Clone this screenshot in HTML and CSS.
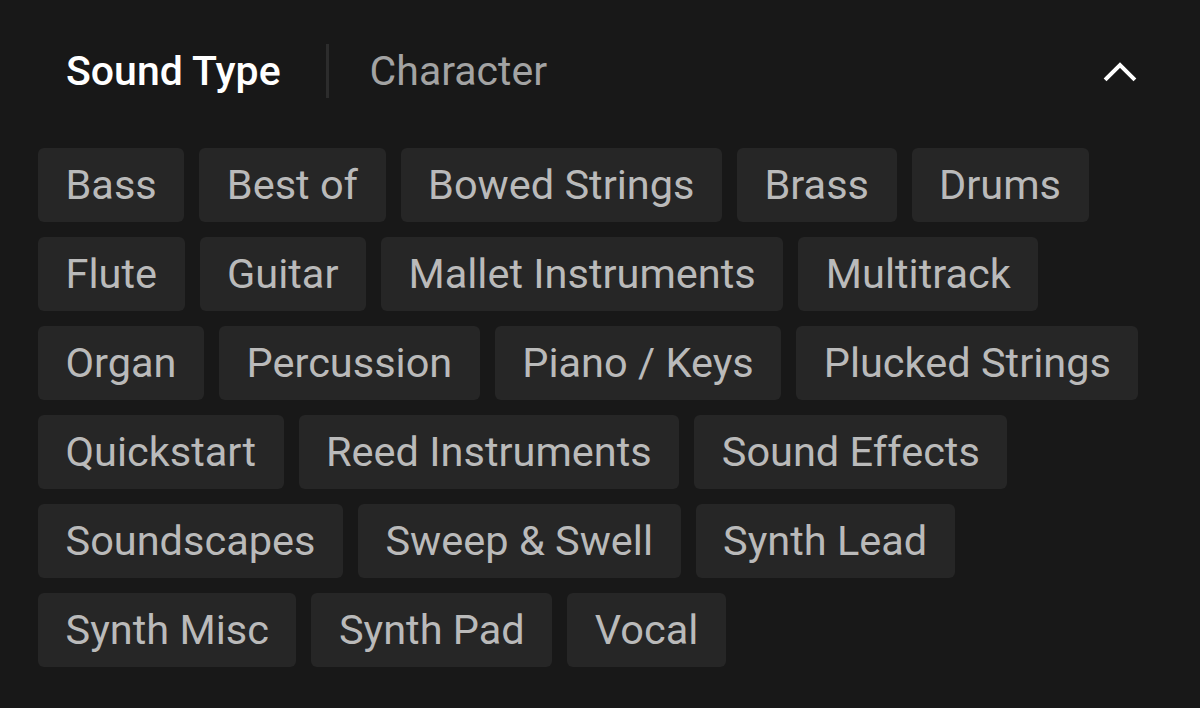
FILE: index.html
```html
<!DOCTYPE html>
<html>
<head>
<meta charset="utf-8">
<link rel="stylesheet" href="styles.css">
</head>
<body>
<div class="panel">
  <div class="header">
    <div class="tabs">
      <span class="tab active">Sound Type</span>
      <span class="divider"></span>
      <span class="tab">Character</span>
    </div>
    <svg class="chevron" width="34" height="22" viewBox="0 0 34 22"><path d="M3.5 18.5 L17 5 L30.5 18.5" fill="none" stroke="#ffffff" stroke-width="4" stroke-linecap="square"/></svg>
  </div>
  <div class="tags">
    <span class="tag">Bass</span>
    <span class="tag">Best of</span>
    <span class="tag">Bowed Strings</span>
    <span class="tag">Brass</span>
    <span class="tag">Drums</span>
    <span class="tag">Flute</span>
    <span class="tag">Guitar</span>
    <span class="tag">Mallet Instruments</span>
    <span class="tag">Multitrack</span>
    <span class="tag">Organ</span>
    <span class="tag">Percussion</span>
    <span class="tag">Piano / Keys</span>
    <span class="tag">Plucked Strings</span>
    <span class="tag">Quickstart</span>
    <span class="tag">Reed Instruments</span>
    <span class="tag">Sound Effects</span>
    <span class="tag">Soundscapes</span>
    <span class="tag">Sweep &amp; Swell</span>
    <span class="tag">Synth Lead</span>
    <span class="tag">Synth Misc</span>
    <span class="tag">Synth Pad</span>
    <span class="tag">Vocal</span>
  </div>
</div>
</body>
</html>
```
FILE: styles.css
```css
html, body {
  margin: 0;
  padding: 0;
  background: #181818;
}
body {
  width: 1200px;
  height: 708px;
  overflow: hidden;
  font-family: Roboto, "Noto Sans", sans-serif;
}
.panel {
  padding: 0 38px;
}
.header {
  height: 148px;
  display: flex;
  align-items: center;
  justify-content: space-between;
  padding: 0 25px 6px 28px;
  box-sizing: border-box;
}
.tabs {
  display: flex;
  align-items: center;
}
.tab {
  font-size: 41px;
  color: #a3a3a3;
  line-height: 1;
}
.tab.active {
  color: #ffffff;
  font-weight: 500;
}
.divider {
  width: 3px;
  height: 54px;
  background: #2c2c2c;
  margin: 0 41px 0 45px;
}
.chevron {
  display: block;
}
.tags {
  display: flex;
  flex-wrap: wrap;
  gap: 15px 15px;
}
.tag {
  height: 74px;
  line-height: 74px;
  padding: 0 27.5px;
  background: #262626;
  border-radius: 6px;
  font-size: 41.5px;
  color: #bababa;
  white-space: nowrap;
}
```
